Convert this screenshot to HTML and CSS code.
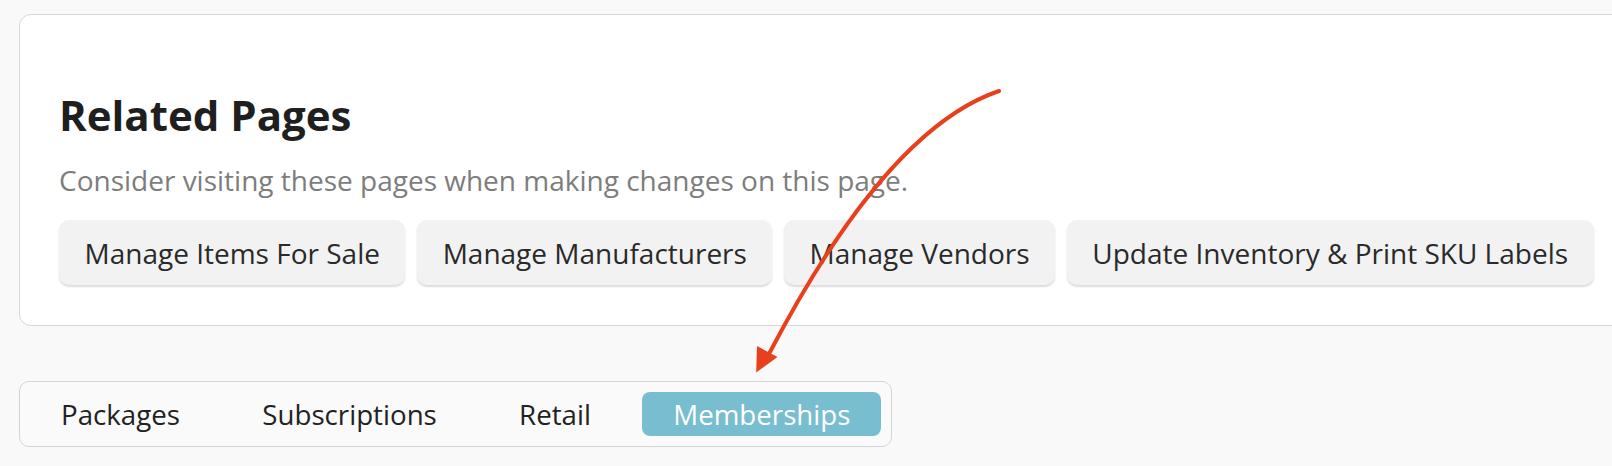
FILE: index.html
```html
<!DOCTYPE html>
<html lang="en">
<head>
<meta charset="utf-8">
<title>Related Pages</title>
<link rel="stylesheet" href="styles.css">
</head>
<body>
<div class="page">
  <section class="card">
    <h2 class="card-title">Related Pages</h2>
    <p class="card-sub">Consider visiting these pages when making changes on this page.</p>
    <div class="links">
      <a class="link-btn" href="#">Manage Items For Sale</a>
      <a class="link-btn" href="#">Manage Manufacturers</a>
      <a class="link-btn" href="#">Manage Vendors</a>
      <a class="link-btn" href="#">Update Inventory &amp; Print SKU Labels</a>
    </div>
  </section>
  <nav class="tabs">
    <a class="tab" href="#">Packages</a>
    <a class="tab" href="#">Subscriptions</a>
    <a class="tab" href="#">Retail</a>
    <a class="tab tab-active" href="#">Memberships</a>
  </nav>
</div>
<svg class="annotation" width="1612" height="466" viewBox="0 0 1612 466" xmlns="http://www.w3.org/2000/svg">
  <path d="M999 91 Q 887 129 770 352" fill="none" stroke="#e8401c" stroke-width="4" stroke-linecap="round"/>
  <polygon points="756.2,372.5 777.5,357 757,346" fill="#e8401c"/>
</svg>
</body>
</html>
```
FILE: styles.css
```css
html, body {
  margin: 0;
  padding: 0;
}
body {
  background: #f9f9f9;
  font-family: "Open Sans", "Noto Sans", "Liberation Sans", sans-serif;
  width: 1612px;
  height: 466px;
  overflow: hidden;
  position: relative;
}
.page {
  display: flex;
  flex-direction: column;
  align-items: flex-start;
  padding: 14px 0 0 19px;
}
.card {
  box-sizing: border-box;
  width: 1640px;
  background: #ffffff;
  border: 1px solid #d6d6d6;
  border-radius: 12px;
  padding: 72px 0 40px 39px;
}
.card-title {
  margin: 0;
  font-size: 42px;
  line-height: 56px;
  font-weight: 700;
  color: #1f1f1f;
}
.card-sub {
  margin: 18px 0 0;
  font-size: 28px;
  line-height: 38px;
  color: #7d7d7d;
}
.links {
  display: flex;
  gap: 11.7px;
  margin-top: 21px;
}
.link-btn {
  display: block;
  padding: 14px 25.5px 13px;
  font-size: 28px;
  line-height: 38px;
  color: #2a2a2a;
  background: #f2f2f2;
  border-radius: 10px;
  text-decoration: none;
  box-shadow: 0 2px 2px rgba(0, 0, 0, 0.14);
}
.tabs {
  display: flex;
  gap: 20.3px;
  margin-top: 55px;
  padding: 10px;
  border: 1px solid #d4d4d4;
  border-radius: 10px;
  background: #fafafa;
}
.tab {
  display: block;
  padding: 3px 31px;
  font-size: 27.7px;
  line-height: 38px;
  color: #222222;
  text-decoration: none;
  border-radius: 8px;
}
.tab-active {
  background: #78bdd0;
  color: #ffffff;
}
.annotation {
  position: absolute;
  left: 0;
  top: 0;
  pointer-events: none;
}
```
